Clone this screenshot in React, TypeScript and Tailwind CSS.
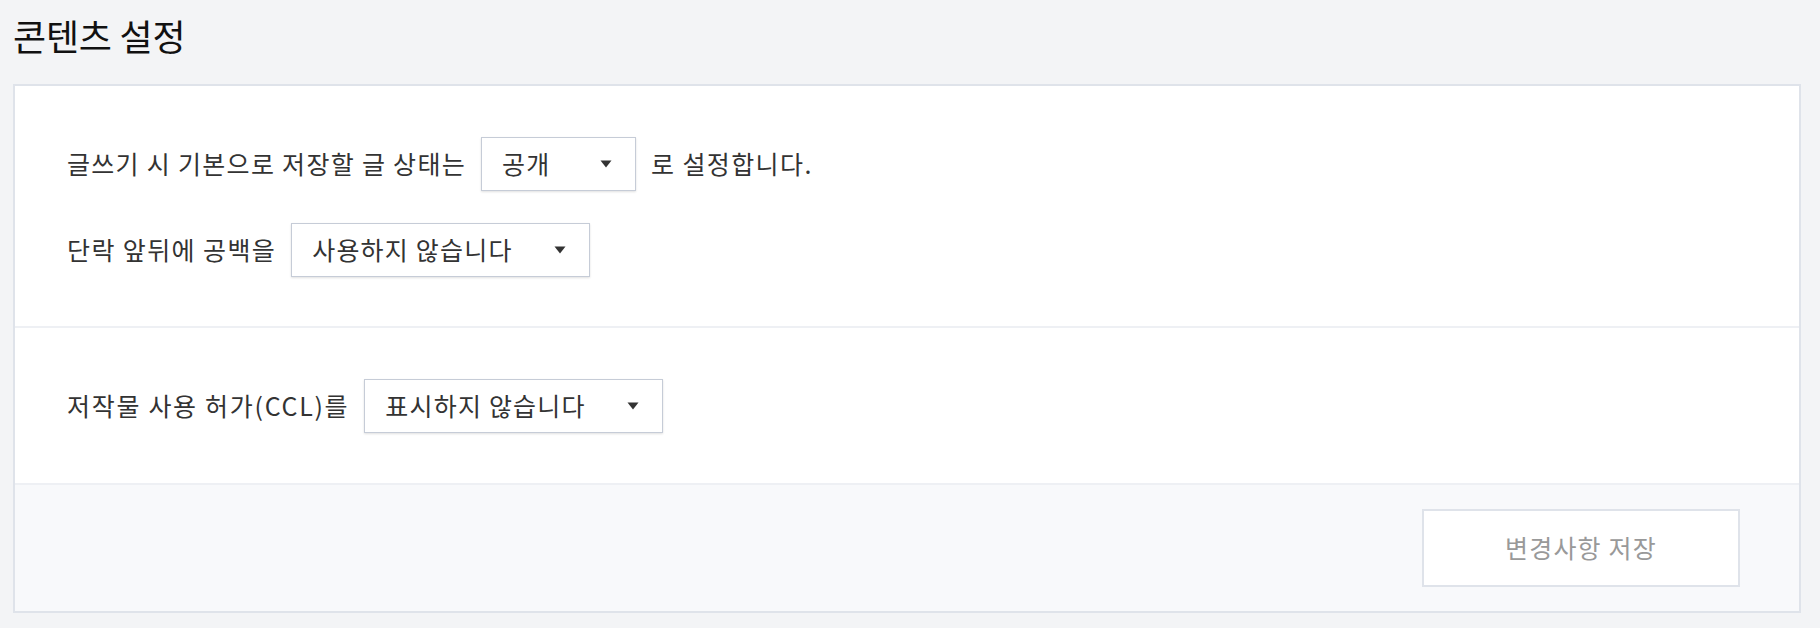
import type { ReactNode } from "react";

const font = { fontFamily: '"Noto Sans CJK KR", "Noto Sans", sans-serif' };

function Caret() {
  return (
    <svg width="12" height="8" viewBox="0 0 12 8" className="shrink-0">
      <path d="M0.5 0.5h11L6 7.5z" fill="#333" />
    </svg>
  );
}

function Select({ value, width }: { value: string; width: string }) {
  return (
    <div
      className={`${width} h-[54px] mx-[15px] flex items-center justify-between pl-[20px] pr-[23px] border border-[#c6ccd7] bg-white shadow-[0_1px_2px_rgba(0,0,0,0.12)] tracking-[1.2px]`}
    >
      <span>{value}</span>
      <Caret />
    </div>
  );
}

function Row({ children }: { children: ReactNode }) {
  return <div className="flex items-center h-[54px] whitespace-nowrap">{children}</div>;
}

export default function App() {
  return (
    <div className="min-h-screen bg-[#f3f4f6] pl-[13px] pr-[19px] text-[#333]" style={font}>
      <h1 className="pt-[12px] mb-[26px] text-[36px] leading-[46px] tracking-[-0.2px] text-[#111] font-normal">
        콘텐츠 설정
      </h1>

      <div className="border-2 border-[#dfe3ea] bg-white text-[25px] tracking-[1.4px]">
        <div className="pt-[51px] pb-[49px] px-[52px] flex flex-col gap-[32px] border-b-2 border-[#eef0f4]">
          <Row>
            <span className="tracking-[1.3px]">글쓰기 시 기본으로 저장할 글 상태는</span>
            <Select value="공개" width="w-[155px]" />
            <span>로 설정합니다.</span>
          </Row>
          <Row>
            <span>단락 앞뒤에 공백을</span>
            <Select value="사용하지 않습니다" width="w-[299px]" />
          </Row>
        </div>

        <div className="pt-[51px] pb-[50px] px-[52px] border-b-2 border-[#eef0f4]">
          <Row>
            <span className="tracking-[1.7px]">저작물 사용 허가(CCL)를</span>
            <Select value="표시하지 않습니다" width="w-[299px]" />
          </Row>
        </div>

        <div className="bg-[#f8f9fb] py-[24px] pr-[59px] flex justify-end">
          <button className="w-[318px] h-[78px] border-2 border-[#dfe3ea] bg-white text-[#999] text-[25px] tracking-[1.2px]">
            변경사항 저장
          </button>
        </div>
      </div>
    </div>
  );
}
